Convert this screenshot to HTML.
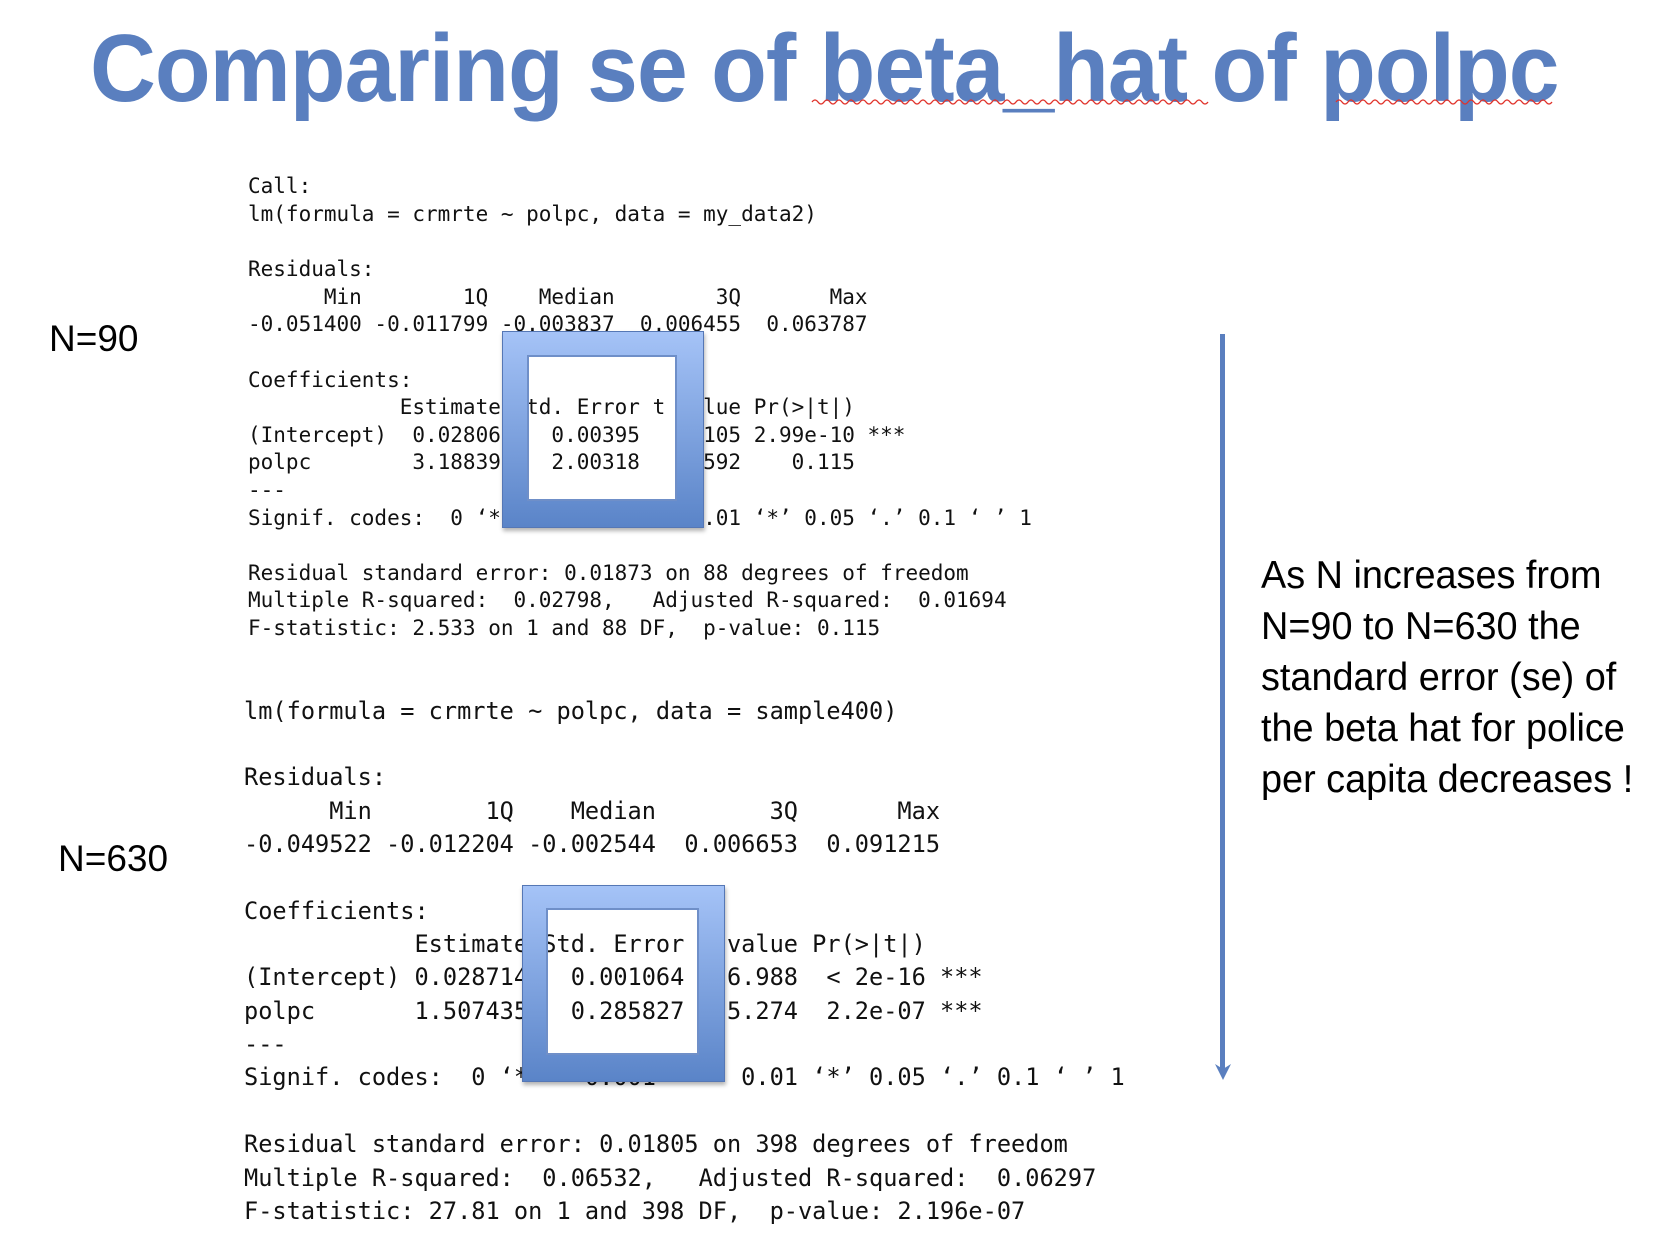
<!DOCTYPE html>
<html><head><meta charset="utf-8"><style>
body{margin:0;width:1668px;height:1260px;background:#fff;position:relative;overflow:hidden}
.t{position:absolute;white-space:pre;line-height:1;color:#111}
.m1{font-family:"DejaVu Sans Mono","Liberation Mono",monospace;font-size:21px}
.m2{font-family:"DejaVu Sans Mono","Liberation Mono",monospace;font-size:23.6px}
.title{position:absolute;left:90px;top:14px;font-family:"Liberation Sans",sans-serif;font-weight:bold;font-size:96px;color:#5a7fbf;white-space:pre;transform:scaleX(0.95);transform-origin:left;letter-spacing:-1px}
.lab{position:absolute;font-family:"Liberation Sans",sans-serif;font-size:37px;color:#000;white-space:pre}
.box{position:absolute;background:linear-gradient(#a5c3f7,#5a84c8);border:1px solid #5577b5;box-shadow:1px 3px 4px rgba(0,0,0,.3)}
.in{position:absolute;background:#fff;border:2px solid #6f8fc8;overflow:hidden}
</style></head><body>
<div class="title">Comparing se of beta_hat of polpc</div>
<svg style="position:absolute;left:0;top:0" width="1668" height="130">
<path d="M812 102 q3 -4 6 0 t6 0 t6 0 t6 0 t6 0 t6 0 t6 0 t6 0 t6 0 t6 0 t6 0 t6 0 t6 0 t6 0 t6 0 t6 0 t6 0 t6 0 t6 0 t6 0 t6 0 t6 0 t6 0 t6 0 t6 0 t6 0 t6 0 t6 0 t6 0 t6 0 t6 0 t6 0 t6 0 t6 0 t6 0 t6 0 t6 0 t6 0 t6 0 t6 0 t6 0 t6 0 t6 0 t6 0 t6 0 t6 0 t6 0 t6 0 t6 0 t6 0 t6 0 t6 0 t6 0 t6 0 t6 0 t6 0 t6 0 t6 0 t6 0 t6 0 t6 0 t6 0 t6 0 t6 0 t6 0 t6 0" stroke="#e0332b" stroke-width="1.3" fill="none"/>
<path d="M1336 102 q3 -4 6 0 t6 0 t6 0 t6 0 t6 0 t6 0 t6 0 t6 0 t6 0 t6 0 t6 0 t6 0 t6 0 t6 0 t6 0 t6 0 t6 0 t6 0 t6 0 t6 0 t6 0 t6 0 t6 0 t6 0 t6 0 t6 0 t6 0 t6 0 t6 0 t6 0 t6 0 t6 0 t6 0 t6 0 t6 0 t6 0" stroke="#e0332b" stroke-width="1.3" fill="none"/>
</svg>

<div class="lab" style="left:49px;top:318px">N=90</div>
<div class="lab" style="left:58px;top:838px">N=630</div>

<div class="t m1" style="left:248px;top:176px">Call:</div>
<div class="t m1" style="left:248px;top:204px">lm(formula = crmrte ~ polpc, data = my_data2)</div>
<div class="t m1" style="left:248px;top:259px">Residuals:</div>
<div class="t m1" style="left:248px;top:287px">      Min        1Q    Median        3Q       Max </div>
<div class="t m1" style="left:248px;top:314px">-0.051400 -0.011799 -0.003837  0.006455  0.063787 </div>
<div class="t m1" style="left:248px;top:370px">Coefficients:</div>
<div class="t m1" style="left:248px;top:397px">            Estimate Std. Error t value Pr(&gt;|t|)    </div>
<div class="t m1" style="left:248px;top:425px">(Intercept)  0.02806    0.00395   7.105 2.99e-10 ***</div>
<div class="t m1" style="left:248px;top:452px">polpc        3.18839    2.00318   1.592    0.115    </div>
<div class="t m1" style="left:248px;top:480px">---</div>
<div class="t m1" style="left:248px;top:508px">Signif. codes:  0 ‘***’ 0.001 ‘**’ 0.01 ‘*’ 0.05 ‘.’ 0.1 ‘ ’ 1</div>
<div class="t m1" style="left:248px;top:563px">Residual standard error: 0.01873 on 88 degrees of freedom</div>
<div class="t m1" style="left:248px;top:590px">Multiple R-squared:  0.02798,	Adjusted R-squared:  0.01694 </div>
<div class="t m1" style="left:248px;top:618px">F-statistic: 2.533 on 1 and 88 DF,  p-value: 0.115</div>

<div class="t m2" style="left:244px;top:700px">lm(formula = crmrte ~ polpc, data = sample400)</div>
<div class="t m2" style="left:244px;top:766px">Residuals:</div>
<div class="t m2" style="left:244px;top:800px">      Min        1Q    Median        3Q       Max </div>
<div class="t m2" style="left:244px;top:833px">-0.049522 -0.012204 -0.002544  0.006653  0.091215 </div>
<div class="t m2" style="left:244px;top:900px">Coefficients:</div>
<div class="t m2" style="left:244px;top:933px">            Estimate Std. Error t value Pr(&gt;|t|)    </div>
<div class="t m2" style="left:244px;top:966px">(Intercept) 0.028714   0.001064  26.988  &lt; 2e-16 ***</div>
<div class="t m2" style="left:244px;top:1000px">polpc       1.507435   0.285827   5.274  2.2e-07 ***</div>
<div class="t m2" style="left:244px;top:1033px">---</div>
<div class="t m2" style="left:244px;top:1066px">Signif. codes:  0 ‘***’ 0.001 ‘**’ 0.01 ‘*’ 0.05 ‘.’ 0.1 ‘ ’ 1</div>
<div class="t m2" style="left:244px;top:1133px">Residual standard error: 0.01805 on 398 degrees of freedom</div>
<div class="t m2" style="left:244px;top:1167px">Multiple R-squared:  0.06532,	Adjusted R-squared:  0.06297 </div>
<div class="t m2" style="left:244px;top:1200px">F-statistic: 27.81 on 1 and 398 DF,  p-value: 2.196e-07</div>

<div class="box" style="left:502px;top:331px;width:200px;height:195px"></div>
<div class="in" style="left:527px;top:355px;width:146px;height:142px">
<div class="t m1" style="left:-281px;top:40px">            Estimate Std. Error t value Pr(&gt;|t|)    </div>
<div class="t m1" style="left:-281px;top:68px">(Intercept)  0.02806    0.00395   7.105 2.99e-10 ***</div>
<div class="t m1" style="left:-281px;top:95px">polpc        3.18839    2.00318   1.592    0.115    </div>
</div>
<div class="box" style="left:522px;top:885px;width:201px;height:195px"></div>
<div class="in" style="left:546px;top:908px;width:149px;height:143px">
<div class="t m2" style="left:-304px;top:23px">            Estimate Std. Error t value Pr(&gt;|t|)    </div>
<div class="t m2" style="left:-304px;top:56px">(Intercept) 0.028714   0.001064  26.988  &lt; 2e-16 ***</div>
<div class="t m2" style="left:-304px;top:90px">polpc       1.507435   0.285827   5.274  2.2e-07 ***</div>
</div>

<div style="position:absolute;left:1220px;top:334px;width:5px;height:735px;background:#5a7fbf"></div>
<svg style="position:absolute;left:1212px;top:1062px" width="22" height="20"><path d="M3 2 L11 18 L19 2 L11 7 Z" fill="#5a7fbf"/></svg>

<div class="lab" style="left:1261px;top:550px;font-size:39px;line-height:51px;transform:scaleX(0.97);transform-origin:left">As N increases from
N=90 to N=630 the
standard error (se) of
the beta hat for police
per capita decreases !</div>
</body></html>
